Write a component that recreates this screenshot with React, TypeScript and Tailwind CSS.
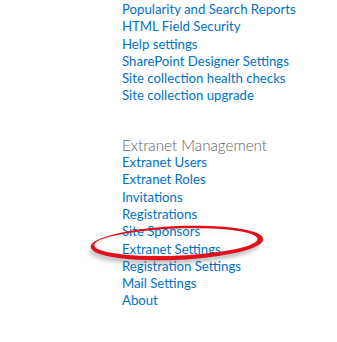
import React from "react";

const top = [
  "Popularity and Search Reports",
  "HTML Field Security",
  "Help settings",
  "SharePoint Designer Settings",
  "Site collection health checks",
  "Site collection upgrade",
];
const ext = [
  "Extranet Users",
  "Extranet Roles",
  "Invitations",
  "Registrations",
  "Site Sponsors",
  "Extranet Settings",
  "Registration Settings",
  "Mail Settings",
  "About",
];

export default function App() {
  return (
    <div
      className="relative w-[337px] h-[342px] bg-white overflow-hidden"
      style={{ fontFamily: 'Lato, "Noto Sans", sans-serif' }}
    >
      <div className="pl-[122px] pt-[1px]">
        <ul className="text-[13.2px] leading-[17.3px] text-[#0072c6]">
          {top.map((t) => (
            <li key={t}>{t}</li>
          ))}
        </ul>
        <div className="mt-[32px] text-[15.2px] leading-[17.3px] text-[#5f5f5f] font-light">
          Extranet Management
        </div>
        <ul className="text-[13.2px] leading-[17.3px] text-[#0072c6]">
          {ext.map((t) => (
            <li key={t}>{t}</li>
          ))}
        </ul>
      </div>
      <svg
        className="absolute left-0 top-0 pointer-events-none"
        width="337"
        height="342"
        viewBox="0 0 337 342"
      >
        <defs>
          <filter id="blur" x="-20%" y="-80%" width="140%" height="260%">
            <feGaussianBlur stdDeviation="2.2" />
          </filter>
        </defs>
        <g transform="translate(177 243) rotate(-1.5) skewX(-25)">
          <path
            d="M-85 4 a85 16.5 0 1 0 170 0 a85 16.5 0 1 0 -170 0 Z M-81 1.5 a81 13.5 0 1 0 162 0 a81 13.5 0 1 0 -162 0 Z"
            fill="#6f6f6f"
            fillRule="evenodd"
            filter="url(#blur)"
            opacity="0.5"
          />
          <path
            d="M-86 0 a86 17 0 1 0 172 0 a86 17 0 1 0 -172 0 Z M-83 -0.9 a81.5 13.6 0 1 0 163 0 a81.5 13.6 0 1 0 -163 0 Z"
            fill="#e2101a"
            fillRule="evenodd"
          />
        </g>
      </svg>
    </div>
  );
}
